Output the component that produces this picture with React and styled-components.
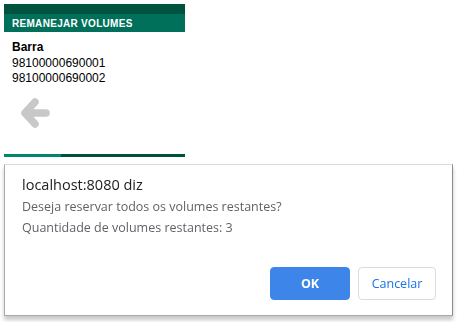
import React from "react";
import styled, { createGlobalStyle } from "styled-components";

const GlobalStyle = createGlobalStyle`
	html, body {
		margin: 0;
		padding: 0;
		background: #ffffff;
	}
`;

const Page = styled.div`
	padding: 4px;
	width: 181px;
	font-family: "Liberation Sans", Arial, sans-serif;
`;

const Header = styled.div`
	border-top: 10px solid #00513e;
	background: #00705a;
	height: 18px;
	display: flex;
	align-items: center;
	padding-left: 8px;
`;

const HeaderTitle = styled.span`
	color: #ffffff;
	font-size: 10px;
	font-weight: 700;
	letter-spacing: 0.3px;
`;

const Content = styled.div`
	padding: 8px 8px 0;
	display: flex;
	flex-direction: column;
`;

const Label = styled.div`
	font-size: 12px;
	font-weight: ${props => (props.bold ? 700 : 400)};
	line-height: 15.5px;
	color: #000000;
`;

const BackButton = styled.div`
	margin: 10px 0 0 7px;
	width: 32px;
	height: 32px;
`;

const Footer = styled.div`
	margin-top: 25px;
	height: 3px;
	display: grid;
	grid-template-columns: 57px 1fr;
`;

const FooterPart = styled.div`
	background: ${props => (props.light ? "#00876c" : "#00503c")};
`;

const Dialog = styled.div`
	position: fixed;
	left: 4px;
	top: 164px;
	width: 449px;
	height: 152px;
	box-sizing: border-box;
	background: #ffffff;
	border: 1px solid #a9a9a9;
	border-top-color: #dcdcdc;
	border-right-color: #8a8a8a;
	box-shadow: 0 4px 4px rgba(0, 0, 0, 0.22);
	font-family: "Open Sans", "Noto Sans", sans-serif;
	display: flex;
	flex-direction: column;
	padding: 0 16px 0 17px;
`;

const DialogTitle = styled.div`
	margin-top: 10px;
	font-size: 14.5px;
	color: #202124;
	line-height: 20px;
`;

const DialogText = styled.div`
	margin-top: 1px;
	font-size: 12.5px;
	line-height: 21px;
	color: #5f6368;
`;

const Actions = styled.div`
	margin-top: auto;
	margin-bottom: 15px;
	display: flex;
	justify-content: flex-end;
	gap: 8px;
`;

const DialogButton = styled.button`
	width: ${props => (props.primary ? "80px" : "78px")};
	height: 33px;
	border-radius: 4px;
	font-family: "Open Sans", "Noto Sans", sans-serif;
	font-size: 12.5px;
	cursor: pointer;
	border: 1px solid ${props => (props.primary ? "#3d85e8" : "#dadce0")};
	background: ${props => (props.primary ? "#3d85e8" : "#ffffff")};
	color: ${props => (props.primary ? "#ffffff" : "#1a73e8")};
	font-weight: ${props => (props.primary ? 700 : 400)};
`;

const ArrowIcon = () => (
	<svg width="32" height="32" viewBox="0 0 32 32">
		<path
			d="M6 16 H27 M16 5 L6 16 L16 27"
			fill="none"
			stroke="#c8c8c8"
			strokeWidth="7.5"
			strokeLinecap="round"
			strokeLinejoin="round"
		/>
	</svg>
);

export default function App() {
	return (
		<>
			<GlobalStyle />
			<Page>
				<Header>
					<HeaderTitle>REMANEJAR VOLUMES</HeaderTitle>
				</Header>
				<Content>
					<Label bold>Barra</Label>
					<Label>98100000690001</Label>
					<Label>98100000690002</Label>
					<BackButton>
						<ArrowIcon />
					</BackButton>
				</Content>
				<Footer>
					<FooterPart light />
					<FooterPart />
				</Footer>
			</Page>
			<Dialog>
				<DialogTitle>localhost:8080 diz</DialogTitle>
				<DialogText>
					Deseja reservar todos os volumes restantes?
					<br />
					Quantidade de volumes restantes: 3
				</DialogText>
				<Actions>
					<DialogButton primary>OK</DialogButton>
					<DialogButton>Cancelar</DialogButton>
				</Actions>
			</Dialog>
		</>
	);
}
